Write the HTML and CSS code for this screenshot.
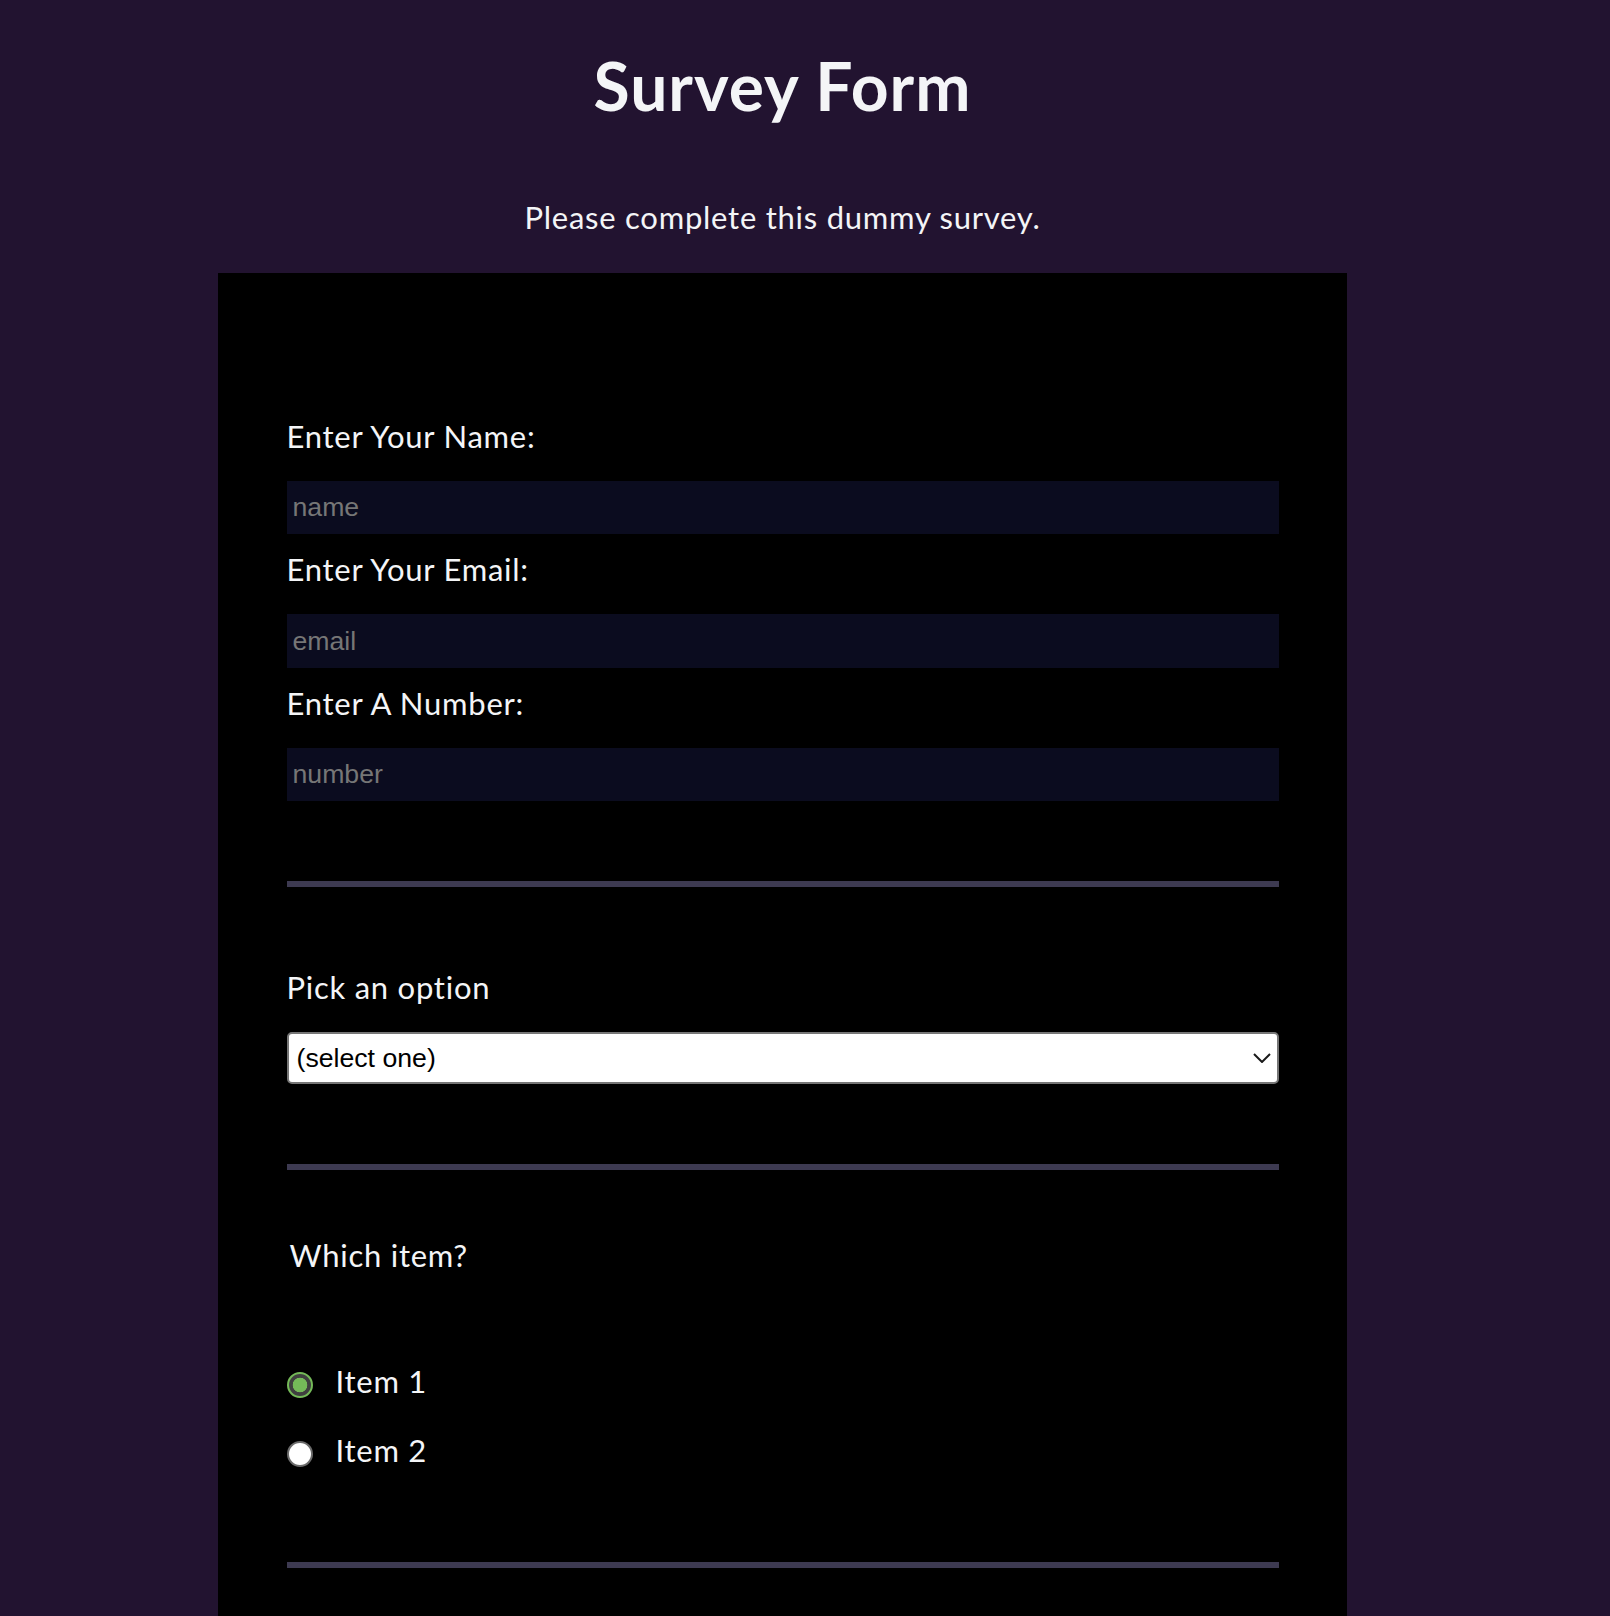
FILE: index.html
```html
<!DOCTYPE html>
<html lang="en">
<head>
<meta charset="utf-8">
<title>Survey Form</title>
<link rel="stylesheet" href="styles.css">
</head>
<body>
<div class="page">
  <h1 class="title" id="title">Survey Form</h1>
  <p class="desc" id="description">Please complete this dummy survey.</p>
  <form class="card" id="survey-form">
    <div class="field">
      <label class="label" id="name-label" for="name">Enter Your Name:</label>
      <input class="text-input" id="name" type="text" placeholder="name">
    </div>
    <div class="field">
      <label class="label" id="email-label" for="email">Enter Your Email:</label>
      <input class="text-input" id="email" type="email" placeholder="email">
    </div>
    <div class="field">
      <label class="label" id="number-label" for="number">Enter A Number:</label>
      <input class="text-input" id="number" type="number" placeholder="number">
    </div>
    <hr class="divider">
    <div class="field field-spaced">
      <label class="label" for="dropdown">Pick an option</label>
      <div class="select-wrap">
        <select class="select" id="dropdown">
          <option>(select one)</option>
          <option>Option 1</option>
          <option>Option 2</option>
        </select>
        <svg class="chevron" width="18" height="10" viewBox="0 0 18 10" aria-hidden="true"><path d="M1 1 L9 9 L17 1" fill="none" stroke="#1a1a1a" stroke-width="2"/></svg>
      </div>
    </div>
    <hr class="divider">
    <p class="question">Which item?</p>
    <div class="options">
      <div class="option"><input class="radio radio-checked" type="radio" name="item" id="item1" value="1" checked><label class="option-label" for="item1">Item 1</label></div>
      <div class="option"><input class="radio" type="radio" name="item" id="item2" value="2"><label class="option-label" for="item2">Item 2</label></div>
    </div>
    <hr class="divider">
  </form>
</div>
</body>
</html>
```
FILE: styles.css
```css
html, body {
  margin: 0;
  padding: 0;
}

body {
  background: #221330;
  color: #f4f5f7;
  font-family: Lato, "Noto Sans", sans-serif;
  letter-spacing: 0.75px;
}

.page {
  width: 1565px;
}

.title {
  margin: 46px 0 0;
  font-size: 66px;
  line-height: 80px;
  font-weight: 700;
  letter-spacing: 1px;
  text-align: center;
}

.desc {
  margin: 72.5px 0 0;
  font-size: 31px;
  line-height: 37px;
  text-align: center;
}

.card {
  box-sizing: border-box;
  width: 1129px;
  margin: 37.5px auto 0;
  padding: 143.5px 68.5px 120px;
  background: #000;
}

.field {
  margin-bottom: 15.7px;
}

.field-spaced {
  margin-top: 80.5px;
}

.label {
  display: block;
  padding-top: 1.5px;
  font-size: 31px;
  line-height: 37px;
  margin-bottom: 26px;
}

.text-input {
  display: block;
  box-sizing: border-box;
  width: 100%;
  height: 53.3px;
  margin: 0;
  padding: 0 6px;
  border: none;
  outline: none;
  background: #0b0c1f;
  color: #fff;
  font-family: "Liberation Sans", Arial, sans-serif;
  font-size: 26.67px;
  letter-spacing: normal;
}

.text-input::placeholder {
  color: #767676;
}

.text-input::-webkit-outer-spin-button,
.text-input::-webkit-inner-spin-button {
  -webkit-appearance: none;
  margin: 0;
}

.select-wrap {
  position: relative;
}

.select {
  display: block;
  box-sizing: border-box;
  width: 100%;
  height: 51.5px;
  margin: 0;
  padding: 0 40px 0 8px;
  -webkit-appearance: none;
  appearance: none;
  border: 2px solid #767676;
  border-radius: 5px;
  background: #fff;
  color: #000;
  font-family: "Liberation Sans", Arial, sans-serif;
  font-size: 26.67px;
  letter-spacing: normal;
}

.chevron {
  position: absolute;
  right: 8px;
  top: 21px;
  pointer-events: none;
}

.divider {
  height: 6px;
  margin: 80px 0 0;
  border: none;
  background: #3d3a51;
}

.question {
  margin: 67px 0 0;
  padding-left: 3px;
  font-size: 31px;
  line-height: 37px;
}

.options {
  margin: 88.8px 0 92.8px;
}

.option {
  font-size: 31px;
  line-height: 37px;
}

.option + .option {
  margin-top: 32.2px;
}

.radio {
  -webkit-appearance: none;
  appearance: none;
  box-sizing: border-box;
  width: 26px;
  height: 26px;
  margin: 0 23px 0 0;
  vertical-align: middle;
  border: 2px solid #6b6b6b;
  border-radius: 50%;
  background: #fff;
}

.radio-checked {
  border-color: #74b958;
  background: radial-gradient(circle, #74b958 0 7px, #3f3f3f 7.6px 100%);
}
```
